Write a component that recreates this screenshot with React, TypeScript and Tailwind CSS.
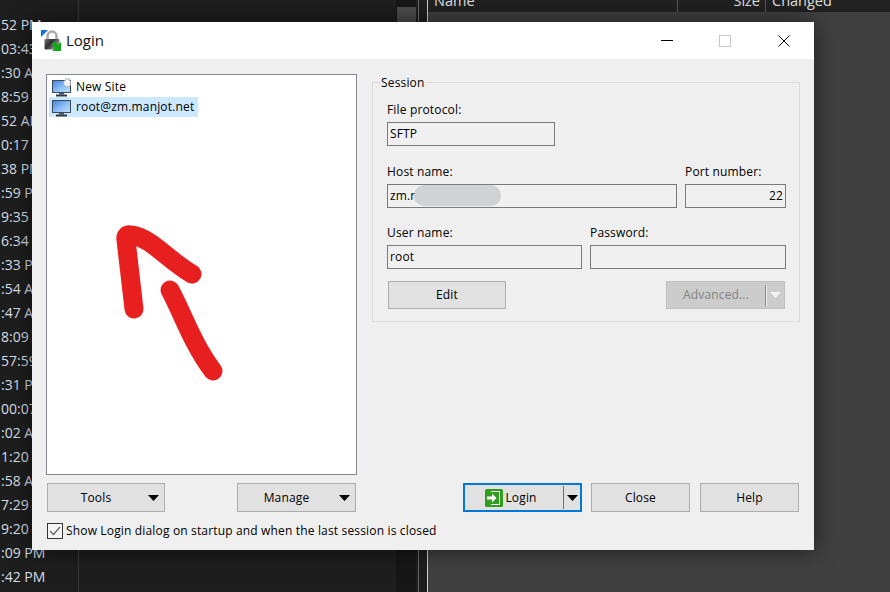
import React from 'react';

const times = [
  '52 PM', '03:43 AM', ':30 AM', '8:59 AM', '52 AM', '0:17 AM', '38 PM', ':59 PM',
  '9:35 AM', '6:34 AM', ':33 PM', ':54 AM', ':47 AM', '8:09 AM', '57:59 AM', ':31 PM',
  '00:07 AM', ':02 AM', '1:20 AM', ':58 AM', '7:29 AM', '9:20 AM', ':09 PM', ':42 PM',
];

function MonitorIcon({ star = false }: { star?: boolean }) {
  return (
    <svg width="19" height="19" viewBox="0 0 19 19" className="shrink-0">
      <defs>
        <linearGradient id="screen-fill" x1="0" y1="0" x2="1" y2="1">
          <stop offset="0" stopColor="#3f7fe0" />
          <stop offset="0.55" stopColor="#8fc0f5" />
          <stop offset="1" stopColor="#c4e0fa" />
        </linearGradient>
      </defs>
      <rect x="0.5" y="2.5" width="18" height="12" fill="url(#screen-fill)" stroke="#3b4a5c" />
      <rect x="7" y="15" width="5" height="1.5" fill="#4a5563" />
      <rect x="4" y="16.5" width="11" height="2" fill="#2e3742" />
      {star && (
        <path
          d="M14.5 0 L15.7 1.4 L17.5 0.8 L17.7 2.8 L19 3.6 L18.2 5.2 L19 6.8 L17.6 7.4 L17.2 9 L15.4 8.4 L13.8 9.4 L13 7.6 L11.2 7 L12 5.2 L11.2 3.6 L13 2.8 Z"
          fill="#f2f5f8"
          stroke="#9aa6b4"
          strokeWidth="0.8"
        />
      )}
    </svg>
  );
}

function LockIcon() {
  return (
    <svg width="22" height="21" viewBox="0 0 22 21" className="shrink-0">
      <defs>
        <linearGradient id="lock-body" x1="0" y1="0" x2="1" y2="0.6">
          <stop offset="0" stopColor="#777777" />
          <stop offset="0.45" stopColor="#2e2e2e" />
          <stop offset="1" stopColor="#a8a8a8" />
        </linearGradient>
      </defs>
      <path d="M0 0 H7 L0 7 Z" fill="#0a6fe0" />
      <path d="M6.5 10 V6 A4.5 4.5 0 0 1 15.5 6 V10" fill="none" stroke="#a8a8a8" strokeWidth="2.4" />
      <rect x="3.5" y="9" width="15" height="10.5" rx="1" fill="url(#lock-body)" />
      <path d="M13 11.5 L16.5 15 L20 12 V21 H11 L14 18 L10.5 14.5 Z" fill="#12a81c" />
    </svg>
  );
}

function LoginIcon() {
  return (
    <svg width="18" height="18" viewBox="0 0 18 18" className="shrink-0">
      <rect width="18" height="18" rx="1.5" fill="#2f9e1f" />
      <path d="M6 2.5 H14.5 V15.5 H6" fill="none" stroke="#ffffff" strokeWidth="1" />
      <path d="M2 7.5 H7 V4.5 L11.5 9 L7 13.5 V10.5 H2 Z" fill="#ffffff" />
    </svg>
  );
}

function Caret({ className = '' }: { className?: string }) {
  return (
    <svg width="11" height="6" viewBox="0 0 11 6" className={`shrink-0 ${className}`}>
      <path d="M0 0 H11 L5.5 6 Z" fill="currentColor" />
    </svg>
  );
}

function Field({ label, value, right = false, className = '' }: { label: string; value?: string; right?: boolean; className?: string }) {
  return (
    <div className={`flex flex-col ${className}`}>
      <div className="h-[20px] leading-[16px] whitespace-nowrap">{label}</div>
      <div className={`h-[24px] border border-[#7a7a7a] bg-[#f0f0f0] flex items-center px-[2px] ${right ? 'justify-end' : ''}`}>
        {value}
      </div>
    </div>
  );
}

function GrayButton({ label, className = '' }: { label: string; className?: string }) {
  return (
    <button className={`bg-[#e1e1e1] border border-[#adadad] flex items-center justify-center text-black ${className}`}>
      {label}
    </button>
  );
}

function MenuButton({ label, className = '' }: { label: string; className?: string }) {
  return (
    <button className={`h-[29px] bg-[#e1e1e1] border border-[#adadad] flex items-center text-black ${className}`}>
      <span className="flex-1 text-center pr-[4px]">{label}</span>
      <Caret className="mr-[5px]" />
    </button>
  );
}

export default function App() {
  return (
    <div className="relative w-[890px] h-[592px] overflow-hidden flex bg-[#404040] font-['Open_Sans',sans-serif]">
      {/* Background file panels */}
      <div className="relative w-[396px] bg-[#1e1e1e] text-[#d6dee8] text-[14px] pt-[13px] overflow-hidden">
        <div className="absolute left-[78px] top-0 bottom-0 w-px bg-[#3a3a3a]" />
        {times.map((t, i) => (
          <div key={i} className="h-[24px] leading-[24px] whitespace-nowrap pl-px">{t}</div>
        ))}
      </div>
      <div className="w-[20px] bg-[#171717] pt-[7px] pl-px">
        <div className="h-[15px] bg-[#4d4d4d]" />
      </div>
      <div className="w-[12px] bg-[#1e1e1e] flex">
        <div className="ml-[2px] w-px bg-[#6a6a6a]" />
        <div className="ml-[8px] w-px bg-[#d0d0d0]" />
      </div>
      <div className="flex-1 flex flex-col">
        <div className="h-[12px] bg-[#212121] flex overflow-hidden text-[#e0e0e0] text-[14.5px] leading-[12px]">
          <div className="w-[249px] pl-[6px] -mt-[5px]">Name</div>
          <div className="w-[88px] h-[17px] -mt-[5px] border-l border-[#555555] text-right pr-[5px]">Size</div>
          <div className="flex-1 h-[17px] -mt-[5px] border-l border-[#555555] pl-[6px]">Changed</div>
        </div>
      </div>

      {/* Login dialog */}
      <div className="absolute left-[32px] top-[22px] w-[782px] h-[528px] flex flex-col text-[12px] tracking-[0.16px] text-black shadow-[0_0_22px_rgba(0,0,0,0.55)]">
        <div className="h-[37px] bg-white flex items-center pl-[9px] shrink-0">
          <LockIcon />
          <span className="ml-[3px] text-[15px] tracking-normal text-[#111111]">Login</span>
          <div className="ml-auto flex items-center">
            <div className="w-[12px] h-px bg-black mr-[46px] -mt-[1px]" />
            <div className="w-[12px] h-[12px] border border-[#c8c8c8] mr-[47px]" />
            <svg width="12" height="12" viewBox="0 0 12 12" className="mr-[24px]">
              <path d="M0.5 0.5 L11.5 11.5 M11.5 0.5 L0.5 11.5" stroke="#000000" strokeWidth="1" fill="none" />
            </svg>
          </div>
        </div>

        <div className="flex-1 bg-[#efefef] flex pl-[14px] pt-[15px]">
          {/* Left column: site list */}
          <div className="w-[311px] flex flex-col">
            <div className="h-[401px] bg-white border border-[#82878f] pt-[2px] pl-[2px]">
              <div className="h-[20px] flex items-center pl-[3px]">
                <MonitorIcon star />
                <span className="ml-[5px]">New Site</span>
              </div>
              <div className="h-[20px] w-fit flex items-center pl-[3px] pr-[4px] bg-[#cce8ff]">
                <MonitorIcon />
                <span className="ml-[5px]">root@zm.manjot.net</span>
              </div>
            </div>
            <div className="flex justify-between pl-px pr-px mt-[8px]">
              <MenuButton label="Tools" className="w-[118px]" />
              <MenuButton label="Manage" className="w-[119px]" />
            </div>
            <label className="flex items-center pl-px mt-[10px] whitespace-nowrap">
              <span className="w-[16px] h-[16px] shrink-0 border border-[#333333] bg-[#f5f5f5] flex items-center justify-center">
                <svg width="12" height="10" viewBox="0 0 12 10">
                  <path d="M1 5 L4.5 8.5 L11 1" fill="none" stroke="#666666" strokeWidth="1.3" />
                </svg>
              </span>
              <span className="ml-[3px]">Show Login dialog on startup and when the last session is closed</span>
            </label>
          </div>

          {/* Right column: session group and actions */}
          <div className="w-[428px] ml-[15px] flex flex-col pb-[38px]">
            <div className="relative mt-[8px] h-[240px] border border-[#dcdcdc] pl-[14px] pr-[13px] pt-[19px]">
              <span className="absolute -top-[8px] left-[7px] px-px leading-[16px] bg-[#efefef]">Session</span>
              <Field label="File protocol:" value="SFTP" className="w-[168px]" />
              <div className="flex gap-[8px] mt-[18px]">
                <div className="relative w-[290px]">
                  <Field label="Host name:" value="zm.manjot.net" />
                  <div className="absolute left-[27px] top-[21px] w-[87px] h-[21px] rounded-full bg-[#d0d2d3]" />
                </div>
                <Field label="Port number:" value="22" right className="w-[101px]" />
              </div>
              <div className="flex gap-[8px] mt-[17px]">
                <Field label="User name:" value="root" className="w-[195px]" />
                <Field label="Password:" className="w-[196px]" />
              </div>
              <div className="flex justify-between mt-[12px] pl-px pr-px">
                <GrayButton label="Edit" className="w-[118px] h-[28px]" />
                <div className="w-[119px] h-[28px] bg-[#cccccc] border border-[#bfbfbf] flex items-center text-[#838383]">
                  <span className="flex-1 text-center">Advanced...</span>
                  <div className="w-[2px] h-[21px] bg-[#f0f0f0] border-l border-[#8a8a8a]" />
                  <Caret className="mx-[3px] text-[#f2f2f2]" />
                </div>
              </div>
            </div>
            <div className="mt-auto flex justify-end mr-px">
              <button className="w-[119px] h-[29px] bg-[#e1e1e1] border-2 border-[#0078d7] flex items-center text-black">
                <span className="flex-1 flex items-center justify-center pr-[6px]">
                  <LoginIcon />
                  <span className="ml-[2px]">Login</span>
                </span>
                <span className="w-px h-[23px] bg-[#6e6e6e]" />
                <Caret className="ml-[3px] mr-[2px]" />
              </button>
              <GrayButton label="Close" className="w-[99px] h-[29px] ml-[9px]" />
              <GrayButton label="Help" className="w-[99px] h-[29px] ml-[10px]" />
            </div>
          </div>
        </div>
      </div>

      {/* Hand drawn red arrow */}
      <svg className="absolute left-0 top-0 pointer-events-none" width="890" height="592" viewBox="0 0 890 592">
        <path d="M134 309 L126 240 Q125 234 131 235 C152 238 165 258 192 274" fill="none" stroke="#e81f1f" strokeWidth="19" strokeLinecap="round" strokeLinejoin="round" />
        <path d="M170 290 C182 312 193 345 213 371" fill="none" stroke="#e81f1f" strokeWidth="19" strokeLinecap="round" strokeLinejoin="round" />
      </svg>
    </div>
  );
}
